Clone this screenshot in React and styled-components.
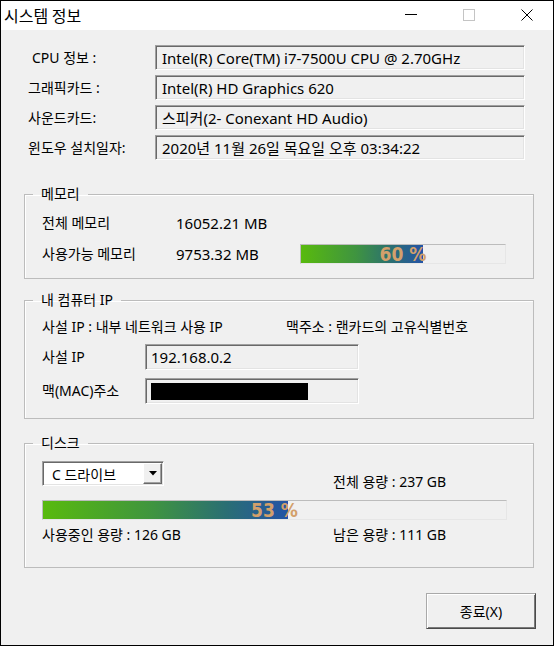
import React from 'react';
import styled, { createGlobalStyle } from 'styled-components';

const GlobalStyle = createGlobalStyle`
  html, body {
    margin: 0;
    padding: 0;
    background: #ffffff;
  }
  * {
    box-sizing: border-box;
  }
  body {
    font-family: "Noto Sans", "Noto Sans CJK KR", sans-serif;
    color: #000;
  }
`;

const info = [
  { label: 'CPU 정보 :', value: 'Intel(R) Core(TM) i7-7500U CPU @ 2.70GHz', indent: 4 },
  { label: '그래픽카드 :', value: 'Intel(R) HD Graphics 620' },
  { label: '사운드카드:', value: '스피커(2- Conexant HD Audio)' },
  { label: '윈도우 설치일자:', value: '2020년 11월 26일 목요일 오후 03:34:22' },
];

function Progress({ pct, width }) {
  return (
    <Bar $width={width}>
      <Fill style={{ width: `${pct}%` }} />
      <Percent>{pct} %</Percent>
    </Bar>
  );
}

export default function App() {
  return (
    <>
      <GlobalStyle />
      <Window>
        <TitleBar>
          <Title>시스템 정보</Title>
          <Controls>
            <svg width="12" height="12" viewBox="0 0 12 12">
              <line x1="0" y1="5.5" x2="12" y2="5.5" stroke="#000" strokeWidth="1" />
            </svg>
            <svg width="12" height="12" viewBox="0 0 12 12">
              <rect x="0.5" y="0.5" width="11" height="11" fill="none" stroke="#c4c4c4" strokeWidth="1" />
            </svg>
            <svg width="12" height="12" viewBox="0 0 12 12">
              <path d="M0.5 0.5 L11.5 11.5 M11.5 0.5 L0.5 11.5" stroke="#000" strokeWidth="1" />
            </svg>
          </Controls>
        </TitleBar>

        <Body>
          <InfoGrid>
            {info.map((row) => (
              <React.Fragment key={row.label}>
                <Label $indent={row.indent}>{row.label}</Label>
                <Field>{row.value}</Field>
              </React.Fragment>
            ))}
          </InfoGrid>

          <Group $top={25}>
            <Legend>메모리</Legend>
            <MemoryGrid>
              <Label>전체 메모리</Label>
              <Value>16052.21 MB</Value>
              <span />
              <Label>사용가능 메모리</Label>
              <Value>9753.32 MB</Value>
              <Progress pct={60} width={206} />
            </MemoryGrid>
          </Group>

          <Group $top={12}>
            <Legend>내 컴퓨터 IP</Legend>
            <IpContent>
              <NoteRow>
                <Label>사설 IP : 내부 네트워크 사용 IP</Label>
                <Label>맥주소 : 랜카드의 고유식별번호</Label>
              </NoteRow>
              <IpRow>
                <Label>사설 IP</Label>
                <IpField>192.168.0.2</IpField>
              </IpRow>
              <IpRow>
                <Label>맥(MAC)주소</Label>
                <IpField>
                  <Masked />
                </IpField>
              </IpRow>
            </IpContent>
          </Group>

          <Group $top={15}>
            <Legend>디스크</Legend>
            <DiskContent>
              <DiskRow>
                <Combo>
                  <ComboText>C 드라이브</ComboText>
                  <ComboButton>
                    <svg width="8" height="5" viewBox="0 0 8 5">
                      <path d="M0 0 H8 L4 4.5 Z" fill="#000" />
                    </svg>
                  </ComboButton>
                </Combo>
                <Label $pad={12}>전체 용량 : 237 GB</Label>
              </DiskRow>
              <Progress pct={53} width={465} />
              <DiskRow>
                <Label>사용중인 용량 : 126 GB</Label>
                <Label>남은 용량 : 111 GB</Label>
              </DiskRow>
            </DiskContent>
          </Group>

          <Footer>
            <CloseButton>종료(X)</CloseButton>
          </Footer>
        </Body>
      </Window>
    </>
  );
}

const Window = styled.div`
  width: 554px;
  height: 646px;
  border: 1px solid #000;
  background: #f0f0f0;
  display: flex;
  flex-direction: column;
`;

const TitleBar = styled.div`
  height: 29px;
  flex-shrink: 0;
  background: #fff;
  display: flex;
  align-items: center;
  padding-left: 3px;
`;

const Title = styled.div`
  flex: 1;
  font-family: "Noto Sans CJK KR", sans-serif;
  font-size: 16px;
  line-height: 20px;
  margin-bottom: 1px;
`;

const Controls = styled.div`
  display: flex;
  align-items: center;
  gap: 46px;
  padding-right: 20px;
  margin-bottom: 2px;

  svg {
    display: block;
  }
`;

const Body = styled.div`
  flex: 1;
  padding: 15px 19px 0 23px;
  display: flex;
  flex-direction: column;
`;

const InfoGrid = styled.div`
  display: grid;
  grid-template-columns: 127px 370px;
  grid-auto-rows: 25px;
  row-gap: 5px;
  margin-left: 4px;
  align-items: center;
`;

const Label = styled.div`
  font-size: 14px;
  line-height: 18px;
  white-space: nowrap;
  padding-left: ${(p) => p.$indent || 0}px;
  padding-top: ${(p) => p.$pad || 0}px;
`;

const sunken = `
  border: 1px solid;
  border-color: #a0a0a0 #ffffff #ffffff #a0a0a0;
  box-shadow: inset 1px 1px 0 #696969, inset -1px -1px 0 #e3e3e3;
`;

const Field = styled.div`
  ${sunken}
  height: 25px;
  display: flex;
  align-items: center;
  padding-left: 6px;
  font-size: 15px;
  white-space: nowrap;
  overflow: hidden;
`;

const Group = styled.fieldset`
  margin: ${(p) => p.$top}px 0 0;
  padding: 0;
  min-width: 0;
  border: 1px solid #bcbcbc;
  box-shadow: inset 1px 1px 0 #ffffff;
`;

const Legend = styled.legend`
  margin-left: 8px;
  padding: 0 8px;
  font-size: 14px;
  line-height: 18px;
`;

const MemoryGrid = styled.div`
  display: grid;
  grid-template-columns: 134px 124px 206px;
  grid-auto-rows: 20px;
  row-gap: 11px;
  align-items: center;
  padding: 10px 0 14px 17px;
`;

const Value = styled.div`
  font-size: 15px;
  line-height: 18px;
  white-space: nowrap;
`;

const Bar = styled.div`
  position: relative;
  width: ${(p) => p.$width}px;
  height: 20px;
  background: #f0f0f0;
  border: 1px solid;
  border-color: #bcbcbc #e6e6e6 #e6e6e6 #bcbcbc;
  overflow: hidden;
`;

const Fill = styled.div`
  height: 100%;
  background: linear-gradient(to right, #58ba0d 0%, #3f9440 45%, #2a6e74 75%, #2453a6 100%);
`;

const Percent = styled.div`
  position: absolute;
  inset: 0;
  display: flex;
  align-items: center;
  justify-content: center;
  font-family: "Liberation Sans Narrow", "DejaVu Sans", sans-serif;
  font-stretch: condensed;
  font-weight: bold;
  font-size: 19px;
  line-height: 18px;
  color: #d3a06b;

  span {
    display: inline-block;
  }
`;

const IpContent = styled.div`
  display: flex;
  flex-direction: column;
  gap: 8px;
  padding: 9px 0 14px 17px;
`;

const NoteRow = styled.div`
  display: grid;
  grid-template-columns: 244px auto;
`;

const IpRow = styled.div`
  display: grid;
  grid-template-columns: 103px 214px;
  align-items: center;
`;

const IpField = styled.div`
  ${sunken}
  height: 26px;
  display: flex;
  align-items: center;
  padding-left: 5px;
  font-size: 15px;
`;

const Masked = styled.div`
  width: 157px;
  height: 17px;
  background: #000;
`;

const DiskContent = styled.div`
  display: flex;
  flex-direction: column;
  padding: 9px 0 23px 17px;

  & > :nth-child(2) {
    margin-top: 9px;
  }
  & > :nth-child(3) {
    margin-top: 6px;
  }
`;

const DiskRow = styled.div`
  display: grid;
  grid-template-columns: 291px auto;
  align-items: start;
`;

const Combo = styled.div`
  ${sunken}
  width: 122px;
  height: 25px;
  background: #fff;
  display: flex;
  align-items: stretch;
  padding: 1px;
`;

const ComboText = styled.div`
  flex: 1;
  display: flex;
  align-items: center;
  padding-left: 8px;
  font-size: 14px;
`;

const ComboButton = styled.div`
  width: 19px;
  background: #f0f0f0;
  border: 1px solid;
  border-color: #ffffff #696969 #696969 #ffffff;
  box-shadow: inset -1px -1px 0 #a0a0a0;
  display: flex;
  align-items: center;
  justify-content: center;
`;

const Footer = styled.div`
  display: flex;
  justify-content: flex-end;
  margin: 25px -2px 0 0;
`;

const CloseButton = styled.button`
  width: 110px;
  height: 36px;
  background: #f0f0f0;
  border: 1px solid;
  border-color: #a9a9a9 #4a4a4a #4a4a4a #a9a9a9;
  box-shadow: inset 1px 1px 0 #ffffff, inset -1px -1px 0 #7a7a7a;
  font-family: "Noto Sans", "Noto Sans CJK KR", sans-serif;
  font-size: 14px;
  color: #000;
  padding: 0;
`;
